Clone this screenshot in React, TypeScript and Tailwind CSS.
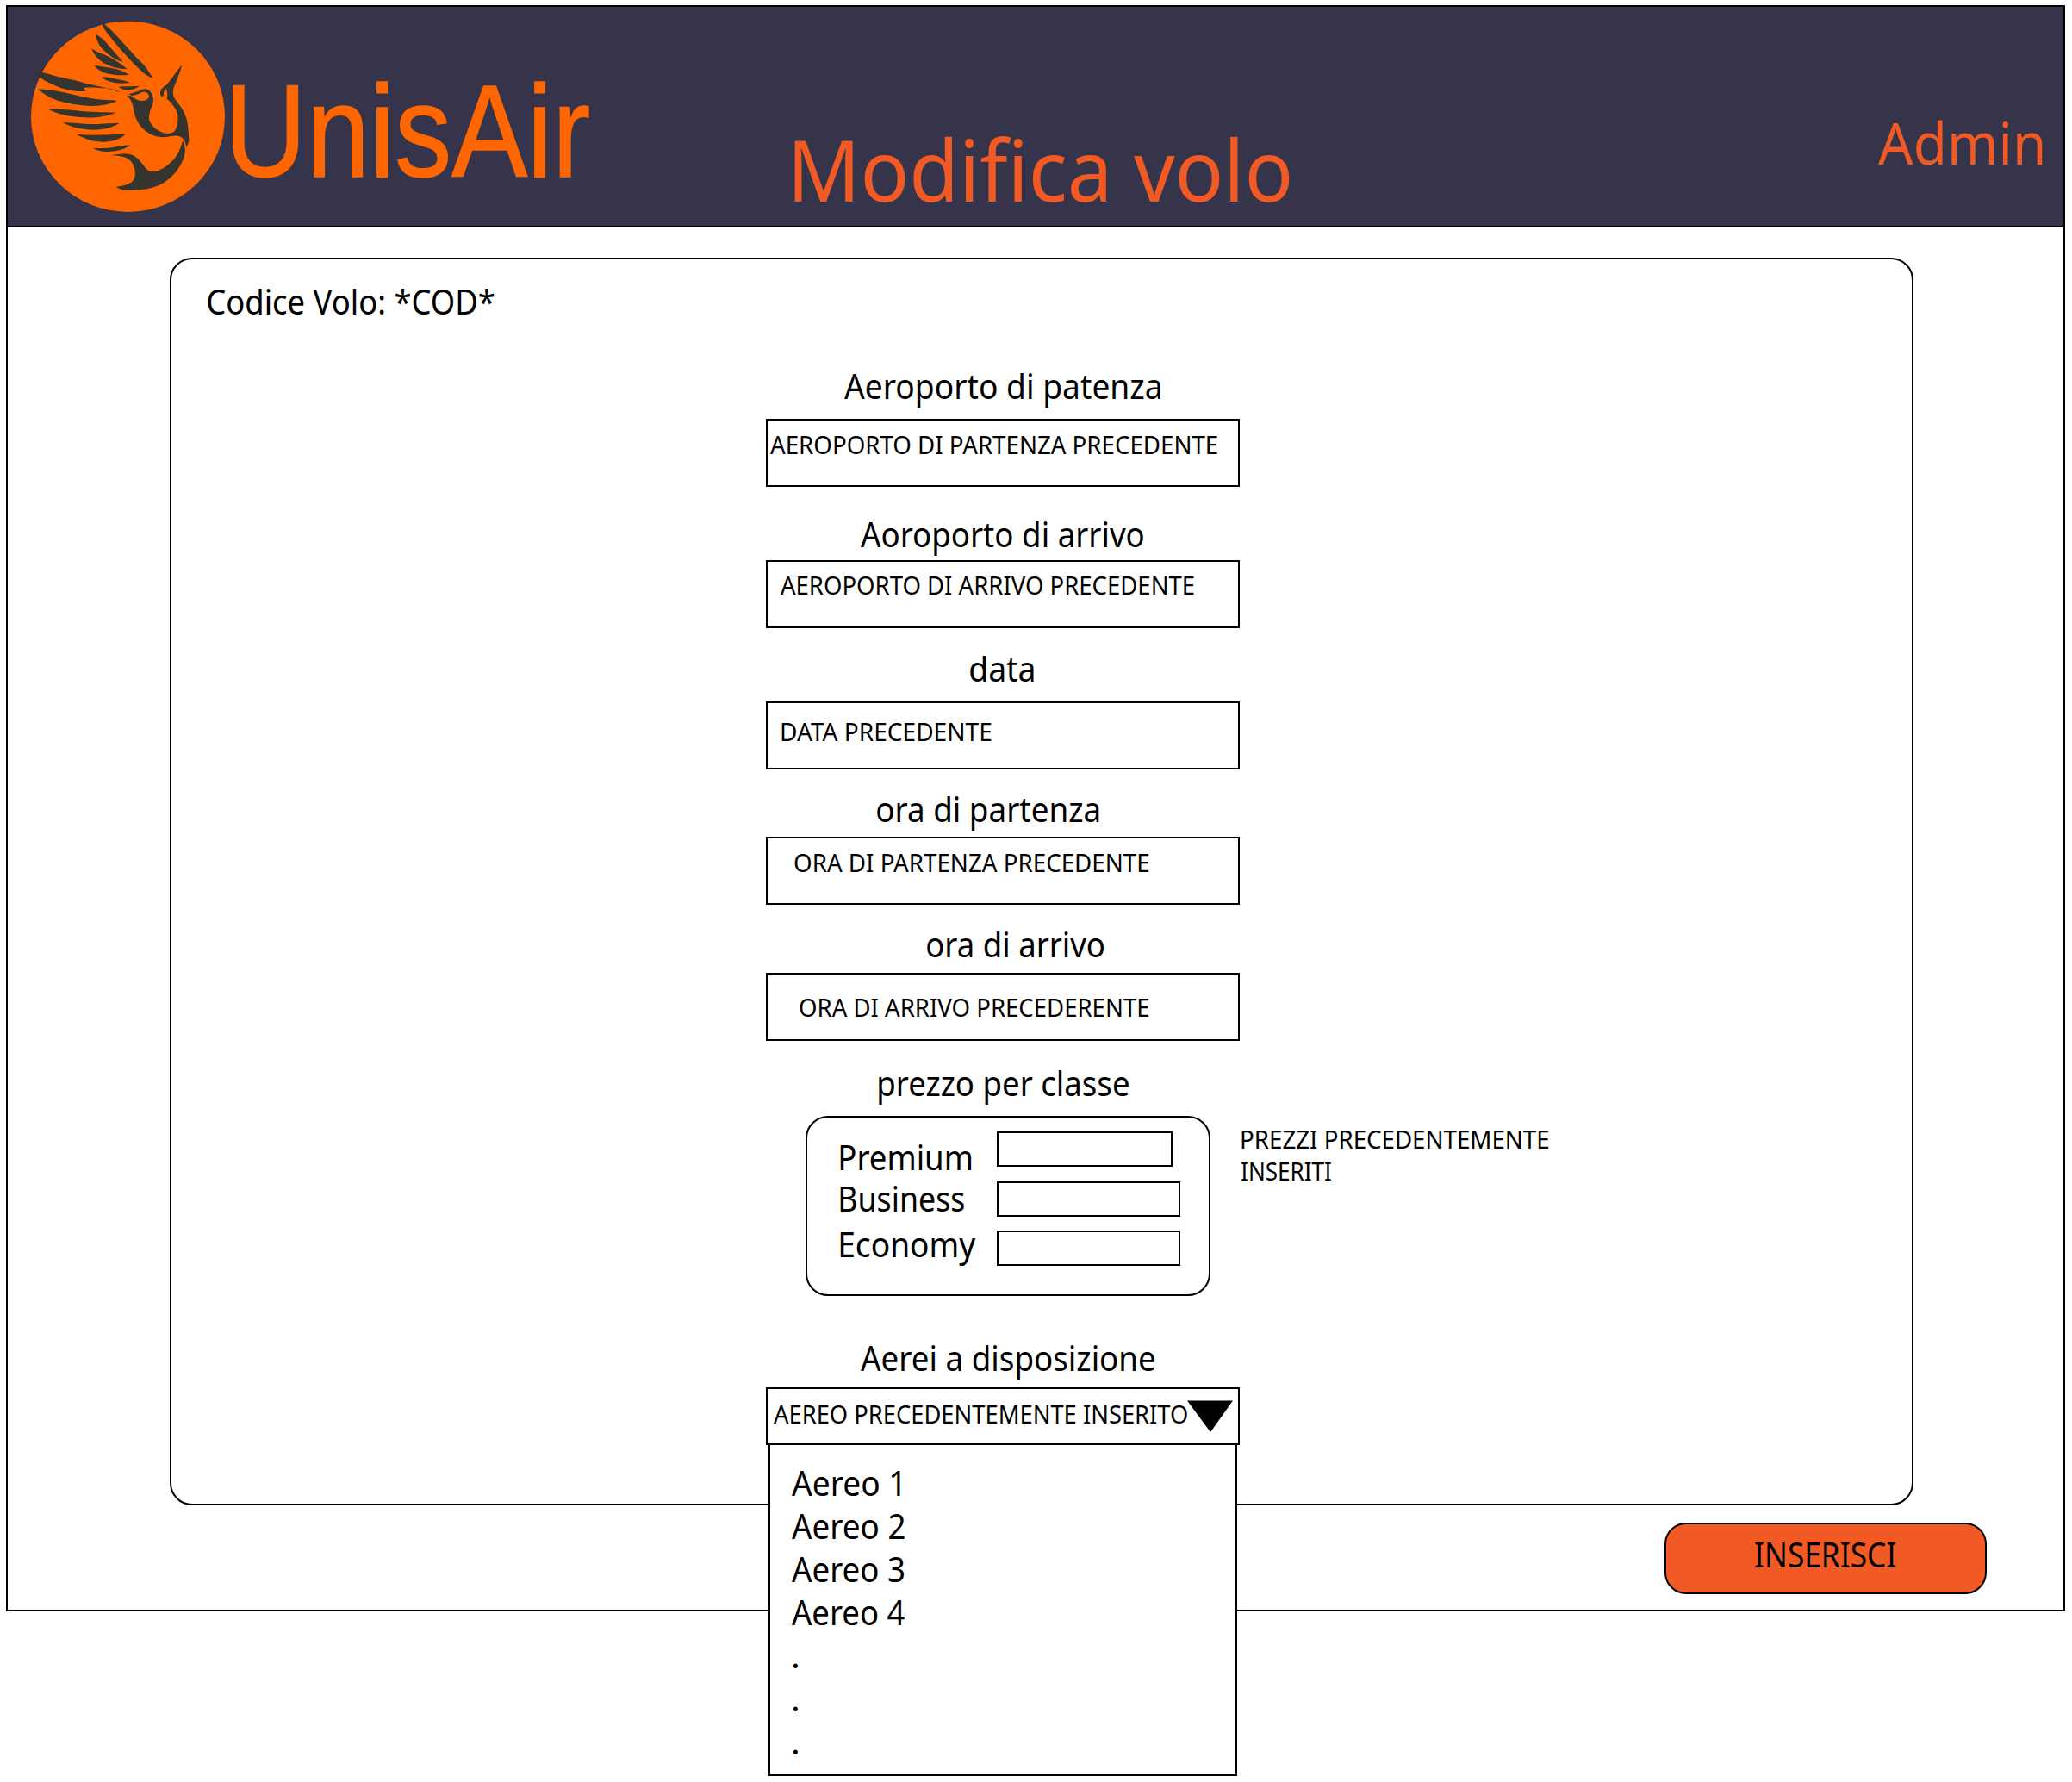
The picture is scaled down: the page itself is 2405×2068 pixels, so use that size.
import React from "react";

const MYRIAD = '"Noto Sans", "Open Sans", sans-serif';
const ARIAL = '"Liberation Sans", Arial, sans-serif';

let measureCtx: CanvasRenderingContext2D | null = null;

/** Horizontal scale and shift that make the text's ink span exactly `width` pixels. */
function fit(text: string, size: number, family: string, width: number) {
  measureCtx = measureCtx ?? document.createElement("canvas").getContext("2d");
  if (!measureCtx) return undefined;
  measureCtx.font = `${size}px ${family}`;
  const m = measureCtx.measureText(text);
  const ink = m.actualBoundingBoxLeft + m.actualBoundingBoxRight;
  const scale = width / ink;
  return `translateX(${m.actualBoundingBoxLeft * scale}px) scaleX(${scale})`;
}

type TextProps = {
  children: string;
  width: number;
  size?: number;
  family?: string;
  className?: string;
};

function FitText({ children, width, size = 40, family = MYRIAD, className = "leading-[50px]" }: TextProps) {
  return (
    <div className={className} style={{ width, fontSize: size, fontFamily: family }}>
      <span
        className="inline-block origin-left align-top whitespace-nowrap"
        style={{ transform: fit(children, size, family, width) }}
      >
        {children}
      </span>
    </div>
  );
}

const SMALL = 28.7;

function Logo() {
  return (
    <svg className="block h-[240px] w-[240px] shrink-0" viewBox="72 24 720 720" aria-label="UnisAir">
      <ellipse cx="445.500" cy="406" rx="337.500" ry="332" fill="#ff6600" />
      <g fill="#35342e">
        <path d="M354 75C364 84 382 99 400 118L470 195L503 228L533 272C515 268 495 252 470 226C435 190 400 150 375 118C363 103 356 88 354 75Z" />
        <path d="M334 120C348 126 362 138 378 158L428 215C410 212 385 198 362 176C346 160 336 142 334 120Z" />
        <path d="M319 168C332 178 346 184 362 190C392 204 418 218 443 241C415 240 388 235 362 220C342 207 326 190 319 168Z" />
        <path d="M328 229C345 229 365 234 385 236C410 240 432 248 449 260C425 264 396 262 372 256C352 251 338 241 328 229Z" />
        <path d="M354 268C372 267 388 272 405 275C422 279 440 280 452 288C430 292 405 290 385 285C370 281 360 276 354 268Z" />
        <path d="M414 302C438 299 462 301 487 299C472 310 452 314 436 312C426 311 418 308 414 302Z" />
        <path d="M111 246C140 250 165 256 190 264C232 274 272 281 300 291C325 297 346 299 370 307C344 306 318 303 294 305L292 310L300 317C260 321 222 311 188 296C158 284 130 266 111 246Z" />
        <path d="M360 303C385 310 402 312 420 320L408 318C390 312 375 309 360 303Z" />
        <path d="M133 310C160 311 188 316 215 320C262 331 300 340 340 346C365 349 388 347 408 352C380 364 350 370 315 369C275 367 235 360 200 350C172 341 150 326 133 310Z" />
        <path d="M166 378C200 379 230 382 265 385C312 392 360 390 403 392C375 404 335 411 295 409C245 407 195 397 166 378Z" />
        <path d="M219 427C250 427 275 430 305 432C345 434 380 427 416 429C390 444 360 453 318 452C280 450 245 442 219 427Z" />
        <path d="M267 467C325 473 382 468 437 467C420 484 392 493 360 494C325 493 292 483 267 467Z" />
        <path d="M324 516C348 515 368 518 390 514C412 510 432 505 453 506C435 519 405 527 372 528C352 528 335 523 324 516Z" />
        <path d="M386 541C410 537 435 533 455 538C478 546 490 562 503 580C510 590 518 597 530 598C560 596 590 574 612 546C625 528 632 508 636 490C646 505 646 530 641 547C630 580 606 612 574 634C545 652 512 660 470 662C445 663 420 664 405 650C430 648 452 642 464 628C474 612 472 590 463 572C452 550 425 540 386 541Z" />
        <path
          fillRule="evenodd"
          d="M440 331C458 324 478 320 495 312C506 308 518 310 524 320C534 332 537 350 531 364C524 382 517 400 519 418C528 440 548 456 570 463C586 467 600 465 608 456C618 442 622 418 618 398C614 380 600 362 590 352L581 344C584 330 583 318 578 309C572 314 568 322 571 332L563 336C556 328 557 316 564 308C572 300 582 297 588 286C604 266 618 244 633 226C628 252 616 276 607 300C600 318 602 334 610 346C626 366 642 388 650 414C656 440 657 465 658 492L650 513C646 500 644 488 634 480C618 468 600 474 578 477C548 480 520 469 500 450C480 432 470 410 466 384C462 362 456 344 440 331ZM456 334C470 346 482 351 495 351C510 350 520 342 519 332C515 323 506 319 494 321C484 328 470 331 456 334Z"
        />
      </g>
      <path d="M436 327L453 329L456 334L446 333Z" fill="#ff6600" />
    </svg>
  );
}

function Header() {
  return (
    <header className="flex h-[256px] items-start border-b-2 border-black bg-[#35344b]">
      <div className="ml-[15px]">
        <Logo />
      </div>
      <FitText
        width={413.500}
        size={153}
        family={ARIAL}
        className="ml-[6px] mt-[54px] leading-[180px] text-[#ff6600] [-webkit-text-stroke:1.5px_#ff6600]"
      >
        UnisAir
      </FitText>
      <FitText width={575} size={98.500} className="ml-[238.500px] mt-[128px] leading-[120px] text-[#f15a24]">
        Modifica volo
      </FitText>
      <FitText width={191} size={67.200} className="ml-[683px] mt-[117px] leading-[80px] text-[#f15a24]">
        Admin
      </FitText>
    </header>
  );
}

type FieldProps = {
  label: string;
  labelWidth: number;
  labelClass: string;
  value: string;
  valueWidth: number;
  boxClass: string;
};

function Field({ label, labelWidth, labelClass, value, valueWidth, boxClass }: FieldProps) {
  return (
    <div>
      <div className={labelClass}>
        <FitText width={labelWidth}>{label}</FitText>
      </div>
      <div className={`h-[79px] w-[550px] border-2 border-black ${boxClass}`}>
        <FitText width={valueWidth} size={SMALL} className="leading-[30px]">
          {value}
        </FitText>
      </div>
    </div>
  );
}

function PriceBox() {
  return (
    <div className="mt-[13px] flex items-start">
      <div className="ml-[46px] flex h-[209px] w-[470px] rounded-[26px] border-2 border-black">
        <div className="w-[220px] pl-[37.500px] pt-[22px]">
          <FitText width={152.700} className="leading-[48px]">Premium</FitText>
          <FitText width={144.300} className="leading-[48px]">Business</FitText>
          <FitText width={157.800} className="mt-[5px] leading-[48px]">Economy</FitText>
        </div>
        <div className="flex flex-col pt-[16px]">
          <div className="h-[41px] w-[204px] border-2 border-black" />
          <div className="mt-[17px] h-[41px] w-[213px] border-2 border-black" />
          <div className="mt-[16px] h-[41px] w-[213px] border-2 border-black" />
        </div>
      </div>
      <div className="ml-[36px] mt-[12px] flex flex-col gap-[7px]">
        <FitText width={356.700} size={SMALL} className="leading-[30px]">PREZZI PRECEDENTEMENTE</FitText>
        <FitText width={104.300} size={SMALL} className="leading-[30px]">INSERITI</FitText>
      </div>
    </div>
  );
}

const planes = [
  { name: "Aereo 1", width: 126.300 },
  { name: "Aereo 2", width: 130.800 },
  { name: "Aereo 3", width: 130.300 },
  { name: "Aereo 4", width: 131.600 },
];

function PlaneSelect() {
  return (
    <div className="relative mt-[9px] flex h-[67px] w-[550px] border-2 border-black">
      <FitText width={480} size={SMALL} className="ml-[6.500px] mt-[14px] leading-[30px]">
        AEREO PRECEDENTEMENTE INSERITO
      </FitText>
      <svg className="mt-[13px] block h-[37px] w-[53px]" viewBox="0 0 53 37">
        <path d="M0 .5H53L27 37Z" fill="black" />
      </svg>
      <div className="absolute left-[1px] top-[65px] h-[384px] w-[544px] border-x-2 border-b-2 border-black bg-white pl-[25px] pt-[19px]">
        {planes.map((p) => (
          <FitText key={p.name} width={p.width}>
            {p.name}
          </FitText>
        ))}
        {[0, 1, 2].map((i) => (
          <p key={i} className="-ml-px text-[40px] leading-[50px]" style={{ fontFamily: MYRIAD }}>
            .
          </p>
        ))}
      </div>
    </div>
  );
}

export default function App() {
  return (
    <div className="h-[2068px] w-[2405px] overflow-hidden bg-white pl-[7px] pt-[6px] text-black">
      <div className="flex h-[1864px] w-[2390px] flex-col border-2 border-black">
        <Header />
        <main className="ml-[188px] mt-[35px] h-[1448px] w-[2024px] shrink-0 rounded-[26px] border-2 border-black">
          <div className="ml-[42px] mt-[24px]">
            <FitText width={333}>Codice Volo: *COD*</FitText>
          </div>
          <div className="ml-[690px] w-[1200px]">
            <Field
              label="Aeroporto di patenza"
              labelWidth={367.400}
              labelClass="ml-[90.500px] mt-[48px]"
              value="AEROPORTO DI PARTENZA PRECEDENTE"
              valueWidth={519.300}
              boxClass="mt-[13px] pl-[3px] pt-[13px]"
            />
            <Field
              label="Aoroporto di arrivo"
              labelWidth={328.700}
              labelClass="ml-[110px] mt-[30px]"
              value="AEROPORTO DI ARRIVO PRECEDENTE"
              valueWidth={480.200}
              boxClass="mt-[5px] pl-[15px] pt-[12px]"
            />
            <Field
              label="data"
              labelWidth={74.300}
              labelClass="ml-[236.500px] mt-[22px]"
              value="DATA PRECEDENTE"
              valueWidth={243.800}
              boxClass="mt-[13px] pl-[16px] pt-[18px]"
            />
            <Field
              label="ora di partenza"
              labelWidth={257.900}
              labelClass="ml-[128.500px] mt-[21px]"
              value="ORA DI PARTENZA PRECEDENTE"
              valueWidth={411.700}
              boxClass="mt-[7px] pl-[30.500px] pt-[13px]"
            />
            <Field
              label="ora di arrivo"
              labelWidth={205.900}
              labelClass="ml-[186.500px] mt-[21px]"
              value="ORA DI ARRIVO PRECEDERENTE"
              valueWidth={405.600}
              boxClass="mt-[8px] pl-[36.500px] pt-[23px]"
            />
            <div className="ml-[130.500px] mt-[24px]">
              <FitText width={290.100}>prezzo per classe</FitText>
            </div>
            <PriceBox />
            <div className="ml-[110px] mt-[47px]">
              <FitText width={341.400}>Aerei a disposizione</FitText>
            </div>
            <PlaneSelect />
          </div>
        </main>
        <button className="ml-[1923px] mt-[20px] flex h-[83px] w-[374px] shrink-0 items-start rounded-[25px] border-2 border-black bg-[#f15a24] pl-[102.500px] pt-[10px]">
          <FitText width={163}>INSERISCI</FitText>
        </button>
      </div>
    </div>
  );
}
